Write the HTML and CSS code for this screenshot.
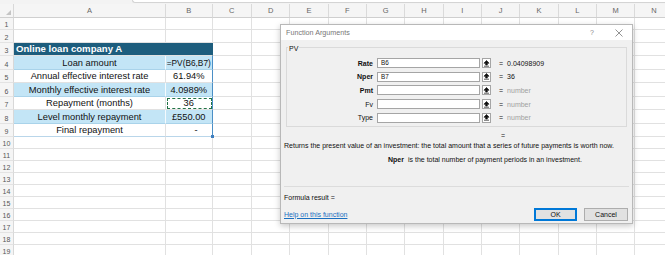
FILE: index.html
```html
<!DOCTYPE html>
<html lang="en">
<head>
  <meta charset="UTF-8">
  <title>Function Arguments</title>
  <link rel="stylesheet" href="styles.css">
</head>
<body>

  <!-- Worksheet -->
  <div class="sheet">
    <div class="strip"><div class="fbar"></div></div>

    <div class="row head">
      <div class="rh corner"><span class="tri"></span></div>
      <div class="cell a">A</div>
      <div class="cell b">B</div>
      <div class="cell c">C</div>
      <div class="rest letters">
        <span>D</span><span>E</span><span>F</span><span>G</span><span>H</span><span>I</span>
        <span>J</span><span>K</span><span>L</span><span>M</span><span>N</span>
      </div>
    </div>

    <div class="row s"><div class="rh">1</div><div class="cell a"></div><div class="cell b"></div><div class="cell c"></div><div class="rest"></div></div>
    <div class="row s"><div class="rh">2</div><div class="cell a"></div><div class="cell b"></div><div class="cell c"></div><div class="rest"></div></div>
    <div class="row t"><div class="rh">3</div><div class="cell ab title">Online loan company A</div><div class="cell c"></div><div class="rest"></div></div>
    <div class="row t blue"><div class="rh">4</div><div class="cell a">Loan amount</div><div class="cell b edit">=PV(B6,B7)</div><div class="cell c"></div><div class="rest"></div></div>
    <div class="row t"><div class="rh">5</div><div class="cell a">Annual effective interest rate</div><div class="cell b">61.94%</div><div class="cell c"></div><div class="rest"></div></div>
    <div class="row t blue"><div class="rh">6</div><div class="cell a">Monthly effective interest rate</div><div class="cell b">4.0989%</div><div class="cell c"></div><div class="rest"></div></div>
    <div class="row t"><div class="rh">7</div><div class="cell a">Repayment (months)</div><div class="cell b marquee">36</div><div class="cell c"></div><div class="rest"></div></div>
    <div class="row t blue"><div class="rh">8</div><div class="cell a">Level monthly repayment</div><div class="cell b">£550.00</div><div class="cell c"></div><div class="rest"></div></div>
    <div class="row t last"><div class="rh">9</div><div class="cell a">Final repayment</div><div class="cell b dash">-</div><div class="cell c"></div><div class="rest"></div></div>
    <div class="row"><div class="rh">10</div><div class="cell a"></div><div class="cell b"></div><div class="cell c"></div><div class="rest"></div></div>
    <div class="row"><div class="rh">11</div><div class="cell a"></div><div class="cell b"></div><div class="cell c"></div><div class="rest"></div></div>
    <div class="row"><div class="rh">12</div><div class="cell a"></div><div class="cell b"></div><div class="cell c"></div><div class="rest"></div></div>
    <div class="row"><div class="rh">13</div><div class="cell a"></div><div class="cell b"></div><div class="cell c"></div><div class="rest"></div></div>
    <div class="row"><div class="rh">14</div><div class="cell a"></div><div class="cell b"></div><div class="cell c"></div><div class="rest"></div></div>
    <div class="row"><div class="rh">15</div><div class="cell a"></div><div class="cell b"></div><div class="cell c"></div><div class="rest"></div></div>
    <div class="row"><div class="rh">16</div><div class="cell a"></div><div class="cell b"></div><div class="cell c"></div><div class="rest"></div></div>
    <div class="row"><div class="rh">17</div><div class="cell a"></div><div class="cell b"></div><div class="cell c"></div><div class="rest"></div></div>
    <div class="row"><div class="rh">18</div><div class="cell a"></div><div class="cell b"></div><div class="cell c"></div><div class="rest"></div></div>
    <div class="row"><div class="rh">19</div><div class="cell a"></div><div class="cell b"></div><div class="cell c"></div><div class="rest"></div></div>
  </div>

  <!-- Function Arguments dialog -->
  <div class="dialog">
    <div class="titlebar">
      <span class="dlg-title">Function Arguments</span>
      <span class="help">?</span>
      <svg class="close" width="8" height="8" viewBox="0 0 8 8"><path d="M0.5 0.5 L7.5 7.5 M7.5 0.5 L0.5 7.5" stroke="#777" stroke-width="0.8" fill="none"/></svg>
    </div>

    <div class="dlg-body">
      <div class="group">
        <span class="group-name">PV</span>
        <div class="args">
          <div class="arg">
            <label>Rate</label><div class="box">B6</div>
            <span class="ref"><svg width="7" height="7" viewBox="0 0 7 7"><path d="M3.5 0.5 L1 3.2 H2.7 V5 H4.3 V3.2 H6 Z M1 6.2 H6" stroke="#111" stroke-width="0.7" fill="#111"/></svg></span>
            <span class="eq">=</span><span class="val">0.04098909</span>
          </div>
          <div class="arg">
            <label>Nper</label><div class="box">B7</div>
            <span class="ref"><svg width="7" height="7" viewBox="0 0 7 7"><path d="M3.5 0.5 L1 3.2 H2.7 V5 H4.3 V3.2 H6 Z M1 6.2 H6" stroke="#111" stroke-width="0.7" fill="#111"/></svg></span>
            <span class="eq">=</span><span class="val">36</span>
          </div>
          <div class="arg">
            <label>Pmt</label><div class="box"></div>
            <span class="ref"><svg width="7" height="7" viewBox="0 0 7 7"><path d="M3.5 0.5 L1 3.2 H2.7 V5 H4.3 V3.2 H6 Z M1 6.2 H6" stroke="#111" stroke-width="0.7" fill="#111"/></svg></span>
            <span class="eq">=</span><span class="val hint">number</span>
          </div>
          <div class="arg">
            <label class="plain">Fv</label><div class="box"></div>
            <span class="ref"><svg width="7" height="7" viewBox="0 0 7 7"><path d="M3.5 0.5 L1 3.2 H2.7 V5 H4.3 V3.2 H6 Z M1 6.2 H6" stroke="#111" stroke-width="0.7" fill="#111"/></svg></span>
            <span class="eq">=</span><span class="val hint">number</span>
          </div>
          <div class="arg">
            <label class="plain">Type</label><div class="box"></div>
            <span class="ref"><svg width="7" height="7" viewBox="0 0 7 7"><path d="M3.5 0.5 L1 3.2 H2.7 V5 H4.3 V3.2 H6 Z M1 6.2 H6" stroke="#111" stroke-width="0.7" fill="#111"/></svg></span>
            <span class="eq">=</span><span class="val hint">number</span>
          </div>
        </div>
      </div>

      <div class="eqline">=</div>
      <p class="desc">Returns the present value of an investment: the total amount that a series of future payments is worth now.</p>
      <p class="argdesc"><b>Nper</b>is the total number of payment periods in an investment.</p>

      <div class="sep"></div>
      <div class="formula">Formula result =</div>

      <div class="footer">
        <a href="#" class="helplink">Help on this function</a>
        <button class="btn ok">OK</button>
        <button class="btn">Cancel</button>
      </div>
    </div>
  </div>

</body>
</html>
```

FILE: styles.css
```css
body {
  margin: 0;
  font-family: "Liberation Sans", Arial, sans-serif;
  background-color: #fff;
  overflow: hidden;
}

/* Worksheet */
.sheet {
  width: 665px;
  height: 255px;
  overflow: hidden;
}

.strip {
  height: 4px;
  background-color: #f3f3f3;
}

.fbar {
  margin-left: 132px;
  height: 2px;
  background-color: #fff;
  border-left: 1px solid #d4d4d4;
  border-bottom: 1px solid #d4d4d4;
  border-bottom-left-radius: 3px;
}

.row {
  display: flex;
  height: 12px;
  width: 700px;
}

.row.s { height: 12.2px; }
.row.t { height: 13.5px; }

.row.head {
  height: 14.3px;
  background-color: #f5f5f5;
  color: #666;
  font-size: 7.5px;
}

.rh {
  width: 14px;
  flex: none;
  box-sizing: border-box;
  background-color: #f5f5f5;
  border-right: 1px solid #d8d8d8;
  border-bottom: 1px solid #e3e3e3;
  color: #555;
  font-size: 7px;
  display: flex;
  align-items: flex-end;
  justify-content: center;
  padding-bottom: 1px;
}

.corner {
  position: relative;
  border-bottom: 1px solid #cfcfcf;
}

.tri {
  position: absolute;
  right: 2px;
  bottom: 2px;
  width: 0;
  height: 0;
  border-left: 5px solid transparent;
  border-bottom: 5px solid #c4c4c4;
}

.cell {
  flex: none;
  box-sizing: border-box;
  border-right: 1px solid #e1e1e1;
  border-bottom: 1px solid #e1e1e1;
  font-size: 9.3px;
  color: #111;
  display: flex;
  align-items: flex-end;
  justify-content: center;
  padding-bottom: 1px;
  white-space: nowrap;
}

.a { width: 152px; }
.b { width: 46.5px; }
.c { width: 39.5px; }
.ab { width: 198.5px; }

.head .cell {
  font-size: 7.5px;
  color: #666;
  align-items: center;
  padding-bottom: 0;
  border-right-color: #dadada;
  border-bottom: 1px solid #cfcfcf;
}

.rest {
  flex: 1;
  border-bottom: 1px solid #e1e1e1;
  background: repeating-linear-gradient(to right, transparent 0 37.33px, #e1e1e1 37.33px 38.33px);
}

.letters {
  display: flex;
  background: none;
  border-bottom: 1px solid #cfcfcf;
}

.letters span {
  width: 38.33px;
  flex: none;
  box-sizing: border-box;
  border-right: 1px solid #dadada;
  text-align: center;
  line-height: 13px;
}

/* table on the sheet */
.title {
  background-color: #1d5d7d;
  color: #fff;
  font-weight: bold;
  font-size: 9.6px;
  justify-content: flex-start;
  padding-left: 2px;
  border-right: 1px solid #1d5d7d;
}

.blue .a, .blue .b {
  background-color: #c3e5f6;
  border-bottom-color: #a9d3ea;
}

.blue .a { border-right-color: #f4fafd; }

.t .b { border-right: 1px solid #4b8fc6; }
.last .a, .last .b { border-bottom-color: #b9d6ea; }

.edit {
  font-size: 8.3px;
}

.marquee {
  outline: 1px dashed #217346;
  outline-offset: -2px;
}

.dash {
  justify-content: flex-end;
  padding-right: 14px;
  position: relative;
}

.dash::after {
  content: "";
  position: absolute;
  right: -2px;
  bottom: -2px;
  width: 3px;
  height: 3px;
  background-color: #3f7fbf;
}

/* Dialog */
.dialog {
  position: absolute;
  left: 280px;
  top: 24px;
  width: 353px;
  height: 200px;
  box-sizing: border-box;
  background-color: #f0f0f0;
  border: 1px solid #b8b8b8;
  box-shadow: 0 2px 6px rgba(0, 0, 0, 0.22);
  font-size: 7px;
  color: #111;
}

.titlebar {
  height: 15px;
  background-color: #fff;
  display: flex;
  align-items: center;
  padding: 0 9px 0 5px;
}

.dlg-title {
  flex: 1;
  font-size: 7.2px;
  color: #777;
}

.help {
  color: #888;
  font-size: 7px;
  margin-right: 21px;
}

.dlg-body {
  padding: 0 3px 0 3px;
}

.group {
  margin: 7px 2px 0 2px;
  border: 1px solid #dadada;
  padding-bottom: 3px;
}

.group-name {
  display: block;
  width: max-content;
  margin: -3px 0 0 1px;
  padding: 0 1px;
  line-height: 8px;
  background-color: #f0f0f0;
}

.args {
  display: flex;
  flex-direction: column;
  gap: 3.7px;
  margin-top: 5px;
}

.arg {
  display: flex;
  align-items: center;
  height: 10px;
}

.arg label {
  width: 86px;
  text-align: right;
  font-weight: bold;
}

.arg label.plain {
  font-weight: normal;
}

.box {
  margin-left: 4px;
  width: 103px;
  height: 10px;
  box-sizing: border-box;
  background-color: #fff;
  border: 1px solid #a5a5a5;
  font-size: 6.3px;
  line-height: 8px;
  padding-left: 3px;
}

.ref {
  margin-left: 2px;
  width: 9px;
  height: 10px;
  box-sizing: border-box;
  background-color: #fff;
  border: 1px solid #a5a5a5;
  display: flex;
  align-items: center;
  justify-content: center;
}

.eq {
  margin-left: 8px;
}

.val {
  margin-left: 4px;
}

.hint {
  color: #a0a0a0;
}

.eqline {
  margin: 5px 0 0 217px;
  height: 8px;
  line-height: 8px;
}

.desc, .argdesc {
  margin: 0;
  line-height: 9px;
}

.desc {
  margin-top: 1px;
}

.argdesc {
  margin-top: 5px;
  padding-left: 104px;
}

.argdesc b {
  margin-right: 4px;
}

.sep {
  margin-top: 22px;
  height: 1px;
  background-color: #dcdcdc;
}

.formula {
  margin-top: 6px;
  line-height: 9px;
}

.footer {
  display: flex;
  align-items: center;
  margin-top: 6px;
  height: 13px;
}

.helplink {
  flex: 1;
  color: #1a6fc0;
  text-decoration: underline;
}

.btn {
  width: 44px;
  height: 13px;
  padding: 0;
  margin-left: 7px;
  margin-right: 1px;
  font-family: "Liberation Sans", Arial, sans-serif;
  font-size: 7px;
  color: #111;
  background-color: #e1e1e1;
  border: 1px solid #adadad;
}

.btn.ok {
  width: 43px;
  margin-right: 0;
  border: 1px solid #0078d7;
  box-shadow: inset 0 0 0 1px #0078d7;
}
```
